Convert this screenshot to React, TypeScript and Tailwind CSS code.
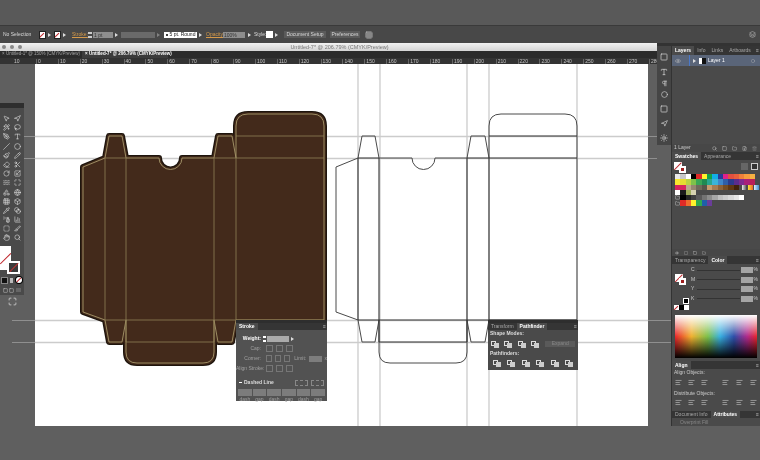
import React from "react";
import {
  MousePointer2, Navigation, Wand2, Lasso, PenTool, Type, Slash, Circle, Paintbrush, Pencil, Eraser, Scissors,
  RotateCw, Scaling, Waves, Maximize, Shapes, Globe, Grid3x3, Box, Pipette, Blend, SprayCan, BarChart3, SquareDashed, Slice, Hand, Search,
  Eye, Layers, Square, Pilcrow, AlignLeft, Sun, Folder, Trash2, FilePlus,
} from "lucide-react";

const font = "font-['Liberation_Sans',Arial,sans-serif]";

const toolIcons = [
  [MousePointer2, Navigation], [Wand2, Lasso], [PenTool, Type], [Slash, Circle], [Paintbrush, Pencil], [Eraser, Scissors],
  [RotateCw, Scaling], [Waves, Maximize], [Shapes, Globe], [Grid3x3, Box], [Pipette, Blend], [SprayCan, BarChart3], [SquareDashed, Slice], [Hand, Search],
];

const rows: string[][] = [
  ["#e8e8e8","#c9c9c9","#ffffff","#000000","#e02a26","#fff22d","#12a14b","#12aee8","#2a3b97","#e0218a","#e3503f","#e8603c","#ef7f3a","#f59c3d","#f6b042"],
  ["#f9e72e","#e6dc33","#b9d342","#7fc24a","#3aa655","#1f8a52","#2aa68f","#3cb4d8","#3f86c8","#2f5ea8","#2c3a8c","#5b2c8c","#7f2a8f","#a81f7a","#b81f5a"],
  ["#d6255e","#d6255e","#b9a88c","#958670","#6f6a5a","#58564a","#c69c6d","#a67c52","#8c6239","#754c24","#603813","#42210b"],
];
const grays = ["#000000","#262626","#404040","#595959","#737373","#8c8c8c","#a6a6a6","#bfbfbf","#cccccc","#d9d9d9","#e6e6e6","#ffffff"];
const brights = ["#e02a26","#ef6c2d","#fff22d","#2fa84f","#1f5fa8","#6a3d9a"];
const rulerNumbers = [0,10,20,30,40,50,60,70,80,90,100,110,120,130,140,150,160,170,180,190,200,210,220,230,240,250,260,270,280];

const dieline = (o: number) => {
  const x = (n: number) => n - o;
  return `M${x(336)} 167 L${x(358)} 158 L${x(362)} 136 L${x(375)} 136 L${x(379)} 158 L${x(412)} 158 A11.5 11.5 0 0 0 ${x(435)} 158 L${x(467)} 158 L${x(471)} 136 L${x(485)} 136 L${x(489)} 158 L${x(489)} 126 Q${x(489)} 114 ${x(501)} 114 L${x(565)} 114 Q${x(577)} 114 ${x(577)} 126 L${x(577)} 320 L${x(489)} 320 L${x(485)} 342 L${x(471)} 342 L${x(467)} 320 L${x(467)} 352 Q${x(467)} 363 ${x(456)} 363 L${x(390)} 363 Q${x(379)} 363 ${x(379)} 352 L${x(379)} 320 L${x(375)} 342 L${x(362)} 342 L${x(358)} 320 L${x(336)} 312 Z`;
};
const folds = (o: number) => {
  const x = (n: number) => n - o;
  return `M${x(358)} 158 V320 M${x(379)} 158 V342 M${x(467)} 158 V342 M${x(489)} 158 V320 M${x(358)} 158 H${x(379)} M${x(467)} 158 H${x(577)} M${x(489)} 136 H${x(577)} M${x(358)} 320 H${x(577)} M${x(379)} 342 H${x(467)}`;
};

function Arrow() {
  return <span className="block h-0 w-0 shrink-0 border-y-[2px] border-l-[3px] border-y-transparent border-l-[#ddd]" />;
}

function NoneSwatch({ className }: { className: string }) {
  return (
    <span className={`relative block overflow-hidden bg-white ${className}`}>
      <span className="absolute left-[-2px] top-1/2 h-[1px] w-[140%] -rotate-45 bg-[#c0272d]" />
    </span>
  );
}

function ControlBar() {
  return (
    <div className="flex h-[17px] items-center whitespace-nowrap bg-[#484848] pl-[3px] text-[5px] text-[#d8d8d8]">
      <span className="w-[36px]">No Selection</span>
      <NoneSwatch className="h-[8px] w-[7px] border border-[#222]" />
      <span className="ml-[2px] mr-[3px]"><Arrow /></span>
      <NoneSwatch className="h-[8px] w-[7px] border border-[#222]" />
      <span className="ml-[2px]"><Arrow /></span>
      <span className="ml-[6px] w-[16px] text-[#d69a4a] underline">Stroke:</span>
      <span className="flex h-[6px] w-[4px] flex-col justify-between"><span className="h-[2px] bg-[#ccc]" /><span className="h-[2px] bg-[#ccc]" /></span>
      <span className="ml-[1px] h-[6px] w-[20px] bg-[#8e8e8e] pl-[1px] leading-[6px] text-[#333]">1 pt</span>
      <span className="ml-[2px]"><Arrow /></span>
      <span className="ml-[3px] h-[6px] w-[34px] bg-[#6a6a6a]" />
      <span className="ml-[2px] opacity-40"><Arrow /></span>
      <span className="ml-[4px] flex h-[6px] w-[33px] items-center justify-center gap-[2px] bg-white text-[#222]"><span className="h-[2px] w-[2px] rounded-full bg-black" />5 pt. Round</span>
      <span className="ml-[2px]"><Arrow /></span>
      <span className="ml-[4px] w-[17px] text-[#d69a4a] underline">Opacity:</span>
      <span className="h-[6px] w-[22px] bg-[#8e8e8e] pl-[1px] leading-[6px] text-[#333]">100%</span>
      <span className="ml-[3px]"><Arrow /></span>
      <span className="ml-[3px] w-[12px]">Style:</span>
      <span className="h-[7px] w-[7px] bg-white" />
      <span className="ml-[2px]"><Arrow /></span>
      <span className="ml-[6px] flex h-[7px] w-[42px] items-center justify-center bg-[#5a5a5a]">Document Setup</span>
      <span className="ml-[4px] flex h-[7px] w-[30px] items-center justify-center bg-[#5a5a5a]">Preferences</span>
      <Grid3x3 size={8} className="ml-[5px]" strokeWidth={1.5} />
      <Layers size={7} className="ml-auto mr-[4px]" strokeWidth={1.5} />
    </div>
  );
}

function Ruler() {
  return (
    <div className="flex h-[6px] items-center overflow-hidden bg-[#333333] text-[5px] leading-none text-[#c4c4c4]">
      <span className="w-[36px] shrink-0 pl-[14px]">10</span>
      {rulerNumbers.map((n) => (
        <span key={n} className="w-[21.9px] shrink-0 border-l border-[#666] pl-[1px]">{n}</span>
      ))}
    </div>
  );
}

function ToolsPanel() {
  return (
    <div className="absolute left-0 top-[39px] flex h-[192px] w-[24px] flex-col bg-[#4a4a4a] text-[#ddd]">
      <div className="h-[5px] shrink-0 bg-[#2e2e2e]" />
      <div className="mt-[7px] flex flex-col gap-[1.6px]">
        {toolIcons.map(([A, B], i) => (
          <div key={i} className="flex h-[7.6px] justify-around px-[1px]">
            <A size={7} strokeWidth={2} />
            <B size={7} strokeWidth={2} />
          </div>
        ))}
      </div>
      <div className="relative mt-[4px] h-[29px] shrink-0">
        <NoneSwatch className="absolute left-0 top-0 h-[24px] w-[11px]" />
        <span className="absolute left-[7px] top-[15px] flex h-[13px] w-[13px] items-center justify-center border-2 border-white bg-[#3a3a3a]">
          <span className="h-[1px] w-[12px] shrink-0 -rotate-45 bg-[#d03030]" />
        </span>
      </div>
      <div className="mt-[2px] flex items-center justify-around px-[1px]">
        <span className="h-[5px] w-[5px] bg-[#111] ring-1 ring-[#888]" />
        <span className="h-[5px] w-[3px] bg-[#bbb]" />
        <NoneSwatch className="h-[6px] w-[6px] rounded-full ring-1 ring-black" />
      </div>
      <div className="mt-[5px] flex justify-around px-[2px]">
        <Square size={5} /><Square size={5} /><span className="h-[4px] w-[5px] bg-[#666]" />
      </div>
      <div className="mt-[4px] flex justify-center"><Maximize size={9} /></div>
    </div>
  );
}

function PanelTabs({ tabs, active, className = "" }: { tabs: string[]; active: number; className?: string }) {
  return (
    <div className={`flex shrink-0 items-stretch whitespace-nowrap bg-[#353535] text-[5px] leading-none ${className}`}>
      {tabs.map((t, i) => (
        <span key={t} className={`flex items-center px-[3px] ${i === active ? "bg-[#4b4b4b] font-bold text-white" : "text-[#a8a8a8]"}`}>{t}</span>
      ))}
      <span className="ml-auto mr-[1px] flex items-center text-[#bbb]">≡</span>
    </div>
  );
}

function GroupIcon() {
  return (
    <span className="relative block h-[7px] w-[8px] shrink-0">
      <span className="absolute left-0 top-0 h-[5px] w-[5px] border border-[#ddd]" />
      <span className="absolute bottom-0 right-0 h-[5px] w-[5px] bg-[#ccc]" />
    </span>
  );
}

function StrokePanel() {
  const cell = "flex h-[7px] w-[7px] items-center justify-center border border-[#767676]";
  const label = "w-[27px] shrink-0 pr-[2px] text-right";
  return (
    <div className="absolute left-[236px] top-[256px] flex h-[81px] w-[91px] flex-col whitespace-nowrap bg-[#525252] text-[5px] text-[#a0a0a0]">
      <div className="h-[3px] shrink-0 bg-[#2e2e2e]" />
      <PanelTabs tabs={["Stroke"]} active={0} className="h-[7px]" />
      <div className="mt-[5px] flex h-[7px] items-center">
        <span className={`${label} font-bold text-white`}>Weight:</span>
        <span className="mr-[1px] flex h-[6px] w-[3px] flex-col justify-between"><span className="h-[2px] bg-white" /><span className="h-[2px] bg-white" /></span>
        <span className="h-[6px] w-[22px] bg-[#aaaaaa]" />
        <span className="ml-[2px]"><Arrow /></span>
      </div>
      <div className="mt-[3px] flex h-[7px] items-center gap-[3px]">
        <span className={label}>Cap:</span><span className={cell} /><span className={cell} /><span className={cell} />
      </div>
      <div className="mt-[3px] flex h-[7px] items-center gap-[3px]">
        <span className={label}>Corner:</span><span className={cell} /><span className={cell} /><span className={cell} />
        <span className="ml-[1px] w-[12px]">Limit:</span><span className="h-[6px] w-[15px] bg-[#7d7d7d]" /><span>x</span>
      </div>
      <div className="mt-[3px] flex h-[7px] items-center gap-[3px]">
        <span className={label}>Align Stroke:</span><span className={cell} /><span className={cell} /><span className={cell} />
      </div>
      <div className="mt-[7px] flex h-[7px] items-center pl-[3px] font-bold text-[#ddd]">
        <span className="mr-[2px] h-[1px] w-[3px] bg-white" />
        <span>Dashed Line</span>
        <span className="ml-auto mr-[3px] flex gap-[3px]"><span className="h-[6px] w-[13px] border border-dashed border-[#888]" /><span className="h-[6px] w-[13px] border border-dashed border-[#888]" /></span>
      </div>
      <div className="mt-[3px] grid grid-cols-6 gap-[1px] px-[2px] text-center leading-[6px]">
        {["dash","gap","dash","gap","dash","gap"].map((t, i) => (
          <div key={i}><div className="h-[7px] bg-[#7c7c7c]" />{t}</div>
        ))}
      </div>
    </div>
  );
}

function PathfinderPanel() {
  return (
    <div className="absolute left-[488px] top-[256px] flex h-[50px] w-[90px] flex-col whitespace-nowrap bg-[#4a4a4a] text-[5px] text-[#ddd]">
      <div className="h-[3px] shrink-0 bg-[#2e2e2e]" />
      <PanelTabs tabs={["Transform", "Pathfinder"]} active={1} className="h-[7px]" />
      <div className="pl-[2px] font-bold">Shape Modes:</div>
      <div className="mt-[3px] flex items-center gap-[5.3px] pl-[3px]">
        <GroupIcon /><GroupIcon /><GroupIcon /><GroupIcon />
        <span className="ml-[1px] flex h-[6px] w-[30px] items-center justify-center bg-[#5a5a5a] text-[#888]">Expand</span>
      </div>
      <div className="mt-[2px] pl-[2px] font-bold">Pathfinders:</div>
      <div className="mt-[3px] flex gap-[6.4px] pl-[5px]">
        <GroupIcon /><GroupIcon /><GroupIcon /><GroupIcon /><GroupIcon /><GroupIcon />
      </div>
    </div>
  );
}

function Artwork() {
  return (
    <svg className="absolute left-0 top-0" width="671" height="396" viewBox="0 64 671 396">
      <g stroke="#8f8f8f" strokeWidth="1">
        <path d="M24 136.5H35M24 158.5H35M12 320.5H35M12 342.5H35M648 136.5H657M648 158.5H657M648 320.5H671M648 342.5H671" fill="none" />
      </g>
      <g stroke="#cccccc" strokeWidth="1.3" fill="none">
        <path d="M35 136.5H648M35 158.5H648M35 320.5H648M35 342.5H648" />
        <path d="M358 64V426M380 64V426M467 64V426M489 64V426M577 64V426" />
      </g>
      <path d={dieline(253)} fill="#432a1b" stroke="#1e150d" strokeWidth="6" strokeLinejoin="round" />
      <path d={dieline(253)} fill="#432a1b" stroke="#432a1b" strokeWidth="3.4" strokeLinejoin="round" />
      <path d={dieline(253)} fill="none" stroke="#a5966a" strokeWidth="0.9" strokeLinejoin="round" />
      <path d={folds(253)} fill="none" stroke="#8f8056" strokeWidth="0.8" />
      <path d={dieline(0)} fill="none" stroke="#4a4a4a" strokeWidth="1" strokeLinejoin="round" />
      <path d={folds(0)} fill="none" stroke="#333333" strokeWidth="1.1" />
    </svg>
  );
}

function Canvas() {
  return (
    <div className="relative min-h-0 flex-1 bg-[#5f5f5f]">
      <div className="absolute left-[35px] top-0 h-[362px] w-[613px] bg-white" />
      <Artwork />
      <ToolsPanel />
      <StrokePanel />
      <PathfinderPanel />
    </div>
  );
}

function DocumentWindow() {
  return (
    <div className="flex w-[657px] flex-col">
      <div className="flex h-[8px] items-center bg-gradient-to-b from-[#f2f2f2] to-[#d4d4d4] pl-[2px] text-[5.5px] text-[#777]">
        <span className="flex gap-[4px]"><span className="h-[4px] w-[4px] rounded-full bg-[#888]" /><span className="h-[4px] w-[4px] rounded-full bg-[#888]" /><span className="h-[4px] w-[4px] rounded-full bg-[#888]" /></span>
        <span className="flex-1 text-center">Untitled-7* @ 206.79% (CMYK/Preview)</span>
      </div>
      <div className="flex h-[7px] items-stretch whitespace-nowrap bg-[#2b2b2b] leading-none">
        <span className="flex w-[82px] items-center pl-[2px] text-[4.5px] text-[#a0a0a0]">× Untitled-1* @ 150% (CMYK/Preview)</span>
        <span className="flex w-[86px] items-center bg-[#3c3c3c] pl-[3px] text-[4.5px] font-bold text-white">× Untitled-7* @ 206.79% (CMYK/Preview)</span>
      </div>
      <Ruler />
      <Canvas />
    </div>
  );
}

function LayersPanel() {
  return (
    <div className="flex h-[109px] shrink-0 flex-col">
      <div className="h-[3px] shrink-0 bg-[#333]" />
      <PanelTabs tabs={["Layers", "Info", "Links", "Artboards"]} active={0} className="h-[9px]" />
      <div className="flex h-[11px] shrink-0 items-center bg-[#5a6579] text-[5px] text-white">
        <Eye size={6} className="ml-[3px] text-[#bbb]" />
        <span className="ml-[8px] h-[11px] w-[1px] bg-[#4a78c8]" />
        <span className="ml-[3px]"><Arrow /></span>
        <span className="ml-[3px] h-[6px] w-[7px] bg-[linear-gradient(90deg,#fff_40%,#111_40%)]" />
        <span className="ml-[2px]">Layer 1</span>
        <Circle size={4} className="ml-auto mr-[5px] text-[#bbb]" />
      </div>
      <div className="flex-1 bg-[#4a4a4a]" />
      <div className="flex h-[8px] shrink-0 items-center bg-[#474747] pl-[2px] text-[5px] text-[#ccc]">
        1 Layer
        <span className="ml-auto mr-[3px] flex gap-[5px]"><Search size={5} /><Square size={5} /><Folder size={5} /><FilePlus size={5} /><Trash2 size={5} className="opacity-50" /></span>
      </div>
    </div>
  );
}

function Swatch({ c }: { c: string }) {
  return <span className="block h-[5.3px] w-[5.33px] shrink-0" style={{ background: c }} />;
}

function SwatchesPanel() {
  return (
    <div className="flex h-[97px] shrink-0 flex-col bg-[#4a4a4a]">
      <PanelTabs tabs={["Swatches", "Appearance"]} active={0} className="h-[8px]" />
      <div className="mt-[2px] flex items-start px-[2px]">
        <span className="relative h-[11px] w-[12px]">
          <NoneSwatch className="absolute left-0 top-0 h-[8px] w-[8px]" />
          <span className="absolute bottom-0 right-0 h-[7px] w-[7px] border-2 border-white bg-[#a02020]" />
        </span>
        <span className="ml-auto mr-[2px] mt-[1px] h-[7px] w-[7px] bg-[#666]" />
        <span className="ml-[1px] mt-[1px] h-[7px] w-[7px] border border-[#ccc] bg-[#333]" />
      </div>
      <div className="ml-[3px] mt-[1px] flex flex-col">
        {rows.map((r, i) => (
          <div key={i} className="flex">{r.map((c, j) => <Swatch key={j} c={c} />)}
            {i === 2 && (
              <>
                <span className="ml-[3px] h-[5.3px] w-[4px] bg-gradient-to-r from-[#eee] to-[#666]" />
                <span className="ml-[2px] h-[5.3px] w-[5px] bg-gradient-to-r from-[#f7e43a] to-[#e8622c]" />
                <span className="ml-[1px] h-[5.3px] w-[5px] bg-gradient-to-r from-[#dfeffa] to-[#3c8fd0]" />
              </>
            )}
          </div>
        ))}
        <div className="flex items-center">
          <Swatch c="#ffffff" /><Swatch c="#1b1b1b" /><Swatch c="#9fae5a" /><Swatch c="#d6d2b0" />
        </div>
        <div className="flex items-center">
          <Folder size={5} className="mr-[0.3px] text-[#ddd]" />
          {grays.map((c) => <Swatch key={c} c={c} />)}
        </div>
        <div className="flex items-center">
          <Folder size={5} className="mr-[0.3px] text-[#ddd]" />
          {brights.map((c) => <Swatch key={c} c={c} />)}
        </div>
      </div>
    </div>
  );
}

function ColorPanel() {
  return (
    <div className="flex h-[112px] shrink-0 flex-col bg-[#4a4a4a] text-[5px] text-[#ccc]">
      <div className="flex h-[7px] shrink-0 items-center gap-[5px] bg-[#474747] pl-[3px]"><Eye size={4} /><Maximize size={4} /><Square size={4} /><Folder size={4} /></div>
      <PanelTabs tabs={["Transparency", "Color"]} active={1} className="h-[8px]" />
      <div className="flex h-[51px] shrink-0 px-[2px] pt-[3px]">
        <div className="relative w-[17px]">
          <span className="absolute left-[1px] top-[7px] h-[9px] w-[11px]"><NoneSwatch className="h-[8px] w-[8px]" /></span>
          <span className="absolute left-[5px] top-[11px] h-[7px] w-[7px] border-2 border-white bg-[#a02020]" />
          <span className="absolute left-[9px] top-[31px] h-[6px] w-[6px] border border-white bg-black" />
          <NoneSwatch className="absolute left-0 top-[38px] h-[5px] w-[5px]" />
          <span className="absolute left-[5px] top-[38px] h-[5px] w-[5px] bg-black" />
          <span className="absolute left-[10px] top-[38px] h-[5px] w-[5px] bg-white" />
        </div>
        <div className="flex flex-1 flex-col gap-[3.5px]">
          {["C","M","Y","K"].map((l) => (
            <div key={l} className="flex h-[6px] items-center">
              <span className="w-[5px]">{l}</span>
              <span className="mx-[1px] h-[1px] flex-1 bg-[#333]" />
              <span className="h-[6px] w-[12px] bg-[#a5a5a5]" />
              <span className="ml-[1px]">%</span>
            </div>
          ))}
        </div>
      </div>
      <div className="relative mx-[3px] h-[43px] w-[82px] bg-[linear-gradient(90deg,#e8262c_0%,#f0b030_20%,#7cc04a_40%,#38b0e0_55%,#2f4ea8_72%,#b02a8c_88%,#e8262c_100%)]">
        <div className="absolute inset-0 bg-gradient-to-b from-white via-transparent to-black" />
      </div>
    </div>
  );
}

function AlignPanel() {
  const Row = () => (
    <div className="mt-[2px] flex items-center pl-[3px]">
      <span className="flex gap-[6px]"><AlignLeft size={7} /><AlignLeft size={7} /><AlignLeft size={7} /></span>
      <span className="ml-[14px] flex gap-[7px]"><AlignLeft size={7} /><AlignLeft size={7} /><AlignLeft size={7} /></span>
    </div>
  );
  return (
    <div className="flex h-[50px] shrink-0 flex-col bg-[#4a4a4a] text-[5px] text-[#ccc]">
      <PanelTabs tabs={["Align"]} active={0} className="h-[8px]" />
      <div className="pl-[2px]">Align Objects:</div>
      <Row />
      <div className="mt-[4px] pl-[2px]">Distribute Objects:</div>
      <Row />
    </div>
  );
}

function AttributesPanel() {
  return (
    <div className="flex h-[15px] shrink-0 flex-col bg-[#4a4a4a] text-[5px] text-[#888]">
      <PanelTabs tabs={["Document Info", "Attributes"]} active={1} className="h-[7px]" />
      <div className="mt-[1px] pl-[8px]">Overprint Fill</div>
    </div>
  );
}

function Dock() {
  return (
    <div className="flex flex-1 bg-[#5f5f5f]">
      <div className="flex h-[102px] w-[14px] shrink-0 flex-col items-center gap-[4px] bg-[#454545] text-[#ddd]">
        <div className="h-[3px] w-full bg-[#333]" />
        <Square size={8} className="mt-[3px]" />
        <Type size={8} className="mt-[3px]" />
        <Pilcrow size={7} />
        <Circle size={7} />
        <Square size={8} className="mt-[3px]" />
        <Navigation size={7} className="mt-[3px]" />
        <Sun size={8} className="mt-[3px]" />
      </div>
      <div className="flex h-[383px] w-[89px] flex-col border-l border-[#333]">
        <LayersPanel />
        <SwatchesPanel />
        <ColorPanel />
        <AlignPanel />
        <AttributesPanel />
      </div>
    </div>
  );
}

export default function App() {
  return (
    <div className={`flex h-[460px] w-[760px] flex-col overflow-hidden bg-[#5f5f5f] blur-[0.35px] ${font}`}>
      <div className="h-[26px] shrink-0 border-b border-[#3a3a3a] bg-[#595959]" />
      <ControlBar />
      <div className="flex min-h-0 flex-1">
        <DocumentWindow />
        <Dock />
      </div>
    </div>
  );
}
